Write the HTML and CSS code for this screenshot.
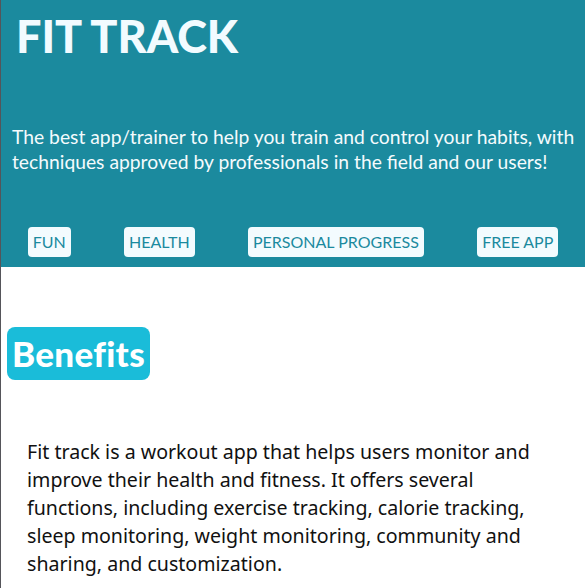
FILE: index.html
```html
<!DOCTYPE html>
<html lang="en">
<head>
<meta charset="utf-8">
<title>Fit Track</title>
<link rel="stylesheet" href="styles.css">
</head>
<body>
<header class="hero">
  <h1 class="title">FIT TRACK</h1>
  <p class="tagline">The best app/trainer to help you train and control your habits, with techniques approved by professionals in the field and our users!</p>
  <ul class="tags">
    <li class="tag">FUN</li>
    <li class="tag">HEALTH</li>
    <li class="tag">PERSONAL PROGRESS</li>
    <li class="tag">FREE APP</li>
  </ul>
</header>
<main class="content">
  <h2 class="section-title">Benefits</h2>
  <p class="desc">Fit track is a workout app that helps users monitor and improve their health and fitness. It offers several functions, including exercise tracking, calorie tracking, sleep monitoring, weight monitoring, community and sharing, and customization.</p>
</main>
</body>
</html>
```

FILE: styles.css
```css
html, body {
  margin: 0;
  padding: 0;
  background: #ffffff;
}
body {
  box-sizing: border-box;
  min-height: 100vh;
  border-left: 1px solid #55555a;
  font-family: "Noto Sans", sans-serif;
}
.hero {
  background: #1b8a9e;
  padding: 14px 0 10px 0;
}
.title {
  margin: 0 0 0 15px;
  font-family: Lato, sans-serif;
  font-weight: 900;
  font-size: 45px;
  line-height: 1;
  color: #f2fbff;
}
.tagline {
  margin: 65px 0 0 11px;
  font-family: Lato, sans-serif;
  font-size: 19.3px;
  line-height: 25px;
  color: #f4fbfd;
}
.tags {
  list-style: none;
  margin: 53px 0 0 0;
  padding: 0;
  display: flex;
  justify-content: space-around;
}
.tag {
  background: #f3fbfe;
  color: #1b8a9e;
  font-family: Lato, sans-serif;
  font-size: 16px;
  line-height: 30px;
  padding: 0 5px;
  border-radius: 4px;
}
.content {
  padding: 60px 0 0 0;
}
.section-title {
  display: inline-block;
  margin: 0 0 0 6px;
  padding: 6px 5px;
  background: #1abcd9;
  color: #ffffff;
  font-family: Lato, sans-serif;
  font-weight: 900;
  font-size: 35px;
  line-height: 41px;
  letter-spacing: 0.3px;
  border-radius: 8px;
}
.desc {
  margin: 58px 30px 0 26px;
  font-size: 19.6px;
  line-height: 28px;
  color: #111111;
}
```
